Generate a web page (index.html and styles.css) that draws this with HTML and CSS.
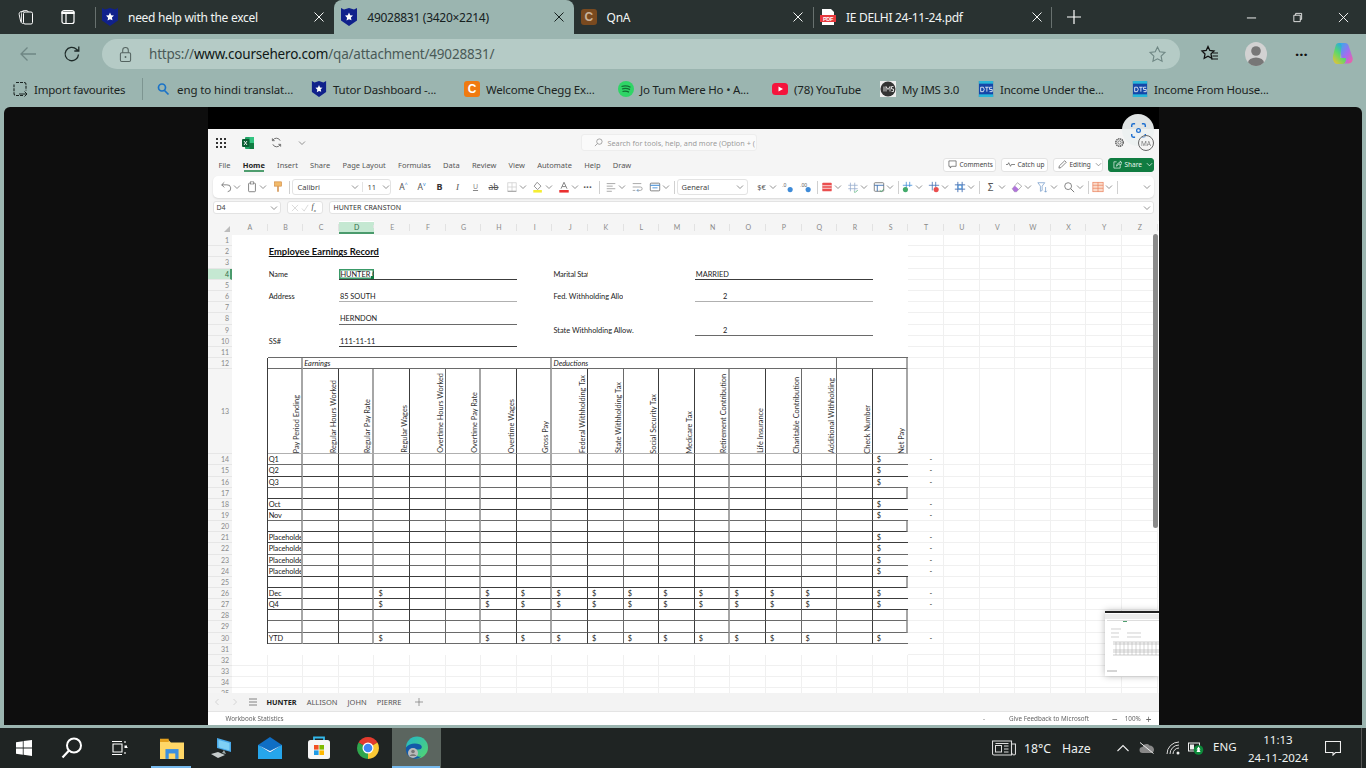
FILE: index.html
```html
<!DOCTYPE html>
<html lang="en">
<head>
<meta charset="utf-8">
<title>49028831 (3420×2214)</title>
<link rel="stylesheet" href="styles.css">
</head>
<body>
<svg class="defs" width="0" height="0" aria-hidden="true">
  <symbol id="shield" viewBox="0 0 16 18"><path d="M0 0l3 1.600L8 0l5 1.600L16 0v12.500L8 18 0 12.500z" fill="#10218b"/><path d="M8 4.600l1.200 2.600 2.800.3-2.100 1.900.6 2.800L8 11.200 5.500 12.600l.6-2.800L4 7.500l2.800-.3z" fill="#fff"/></symbol>
  <symbol id="dts" viewBox="0 0 16 18"><rect width="16" height="18" fill="#1547a8"/><rect width="16" height="3" fill="#29b6d8"/><rect y="15" width="16" height="3" fill="#29b6d8"/><path d="M2 7h3l1 2.500L5 12H2zM7 7h4M9 7v5M15 7h-3v2.500h3V12h-3" fill="none" stroke="#fff" stroke-width=".9"/></symbol>
  <symbol id="close" viewBox="0 0 10 10"><path d="M.5.5l9 9M9.500.5l-9 9" fill="none" stroke="currentColor" stroke-width="1"/></symbol>
  <symbol id="chev" viewBox="0 0 8 8"><path d="M1 2.500l3 3 3-3" fill="none" stroke="#777" stroke-width=".8"/></symbol>
</svg>

<header class="tabbar">
  <div class="tab-tools">
    <svg class="tt" viewBox="0 0 18 18"><rect x="6.500" y="4" width="9" height="12" rx="1.500" fill="none" stroke="#fff" stroke-width="1"/><path d="M6.500 15.500c-1.500 0-2.500-.8-2.800-2L2.200 6.500c-.3-1.500.5-2.500 2-2.900l4-1c1.500-.3 2.500.1 3.200 1.400" fill="none" stroke="#fff" stroke-width="1"/><path d="M4.500 14V5.500c0-1.500.8-2.500 2.500-2.500" fill="none" stroke="#fff" stroke-width=".8"/></svg>
    <svg class="tt" viewBox="0 0 18 18"><rect x="3" y="2.500" width="12" height="13" rx="2" fill="none" stroke="#fff" stroke-width="1.200"/><path d="M3 5.500h12V4H3zM7 5.500v10" stroke="#fff" stroke-width="1.200" fill="#fff"/></svg>
  </div>
  <div class="tab sep">
    <svg class="fav"><use href="#shield"/></svg><span class="tab-title">need help with the excel</span>
    <svg class="x"><use href="#close"/></svg>
  </div>
  <div class="tab active">
    <svg class="fav"><use href="#shield"/></svg><span class="tab-title">49028831 (3420×2214)</span>
    <svg class="x"><use href="#close"/></svg>
  </div>
  <div class="tab">
    <span class="c-badge brown">C</span><span class="tab-title">QnA</span>
    <svg class="x"><use href="#close"/></svg>
  </div>
  <div class="tab sep pdf-tab">
    <svg class="fav pdf" viewBox="0 0 16 16"><path d="M2 0h9l3 3v13H2z" fill="#fff"/><rect x="0" y="6" width="16" height="7" fill="#e8383d"/><text x="8" y="11.600" text-anchor="middle" font-size="5.500" font-weight="700" fill="#fff" font-family="Liberation Sans">PDF</text></svg>
    <span class="tab-title">IE DELHI 24-11-24.pdf</span>
    <svg class="x"><use href="#close"/></svg>
  </div>
  <div class="newtab"><svg viewBox="0 0 16 16"><path d="M8 1v14M1 8h14" stroke="#fff" stroke-width="1.200"/></svg></div>
  <div class="winctl">
    <svg viewBox="0 0 12 12"><path d="M1 6.500h10" stroke="#fff"/></svg>
    <svg viewBox="0 0 12 12"><path d="M2 3.500h7v7H2zM4 3.500V1.500h6.500V8H9" fill="none" stroke="#fff" stroke-width=".9"/></svg>
    <svg viewBox="0 0 12 12"><path d="M1 1l10 10M11 1L1 11" stroke="#fff"/></svg>
  </div>
</header>

<nav class="toolbar">
  <svg class="tb back" viewBox="0 0 20 20"><path d="M18 10H3M9.500 3.500L3 10l6.500 6.500" fill="none" stroke="#6f8784" stroke-width="1.300"/></svg>
  <svg class="tb reload" viewBox="0 0 20 20"><path d="M16.500 10.500a6.700 6.700 0 1 1-2-5.300L16.500 7M16.800 2.500V7h-4.500" fill="none" stroke="#1e2a28" stroke-width="1.300"/></svg>
  <div class="urlbar">
    <svg class="lock" viewBox="0 0 14 18"><path d="M4 7V4.500a3 3 0 0 1 6 0V7" fill="none" stroke="#53625f" stroke-width="1.100"/><rect x="1.500" y="7" width="11" height="9.500" rx="1.500" fill="none" stroke="#53625f" stroke-width="1.100"/><circle cx="7" cy="11.700" r="1" fill="#53625f"/></svg>
    <span class="url">https://<b>www.coursehero.com</b>/qa/attachment/49028831/</span>
    <svg class="star" viewBox="0 0 20 20"><path d="M10 2.200l2.400 5 5.400.7-4 3.800 1 5.400L10 14.500l-4.800 2.600 1-5.400-4-3.800 5.400-.7z" fill="none" stroke="#6f8784" stroke-width="1.200"/></svg>
  </div>
  <svg class="favs" viewBox="0 0 20 20"><path d="M8 2.500l1.800 4 4.200.5-3 3 .8 4.300L8 12.200l-3.800 2.100.8-4.300-3-3 4.200-.5z" fill="none" stroke="#111" stroke-width="1.300"/><path d="M13 9h5M12.500 12h5.500M11 15h7" stroke="#111" stroke-width="1.100"/></svg>
  <div class="avatar"><svg viewBox="0 0 22 24"><circle cx="11" cy="9" r="4.800" fill="#777"/><ellipse cx="11" cy="21" rx="8" ry="5.500" fill="#777"/></svg></div>
  <span class="dots">···</span>
  <svg class="copilot" viewBox="0 0 22 24"><defs><linearGradient id="cp1" x1="0" y1="0" x2="1" y2="1"><stop offset="0" stop-color="#27b5e8"/><stop offset=".55" stop-color="#a46cf0"/><stop offset="1" stop-color="#f9609a"/></linearGradient><linearGradient id="cp2" x1="0" y1="1" x2=".6" y2="0"><stop offset="0" stop-color="#f9c02e"/><stop offset=".55" stop-color="#5cd86a"/><stop offset="1" stop-color="#27a6e8"/></linearGradient></defs><path d="M7 1h6c2 0 3 1 3.500 2.500l4 12c.8 3-1 6-4 6h-6z" fill="url(#cp1)"/><path d="M7 1c-2 0-3 1-3.500 3L1.200 13c-1 4 .5 8.500 4 9h5c2 0 3-1 3.500-3l.3-3H8l1.500-11C10 3 9 1 7 1z" fill="url(#cp2)"/></svg>
</nav>

<nav class="bookmarks">
  <div class="bm bm-import"><svg class="ic" viewBox="0 0 16 16"><path d="M4 1.500h8a2 2 0 0 1 2 2v6M11 14.500H4a2 2 0 0 1-2-2v-9" fill="none" stroke="#1b2422" stroke-width="1.100" stroke-dasharray="3 1"/><path d="M7 13h8M12.500 10.500L15 13l-2.500 2.500" fill="none" stroke="#1b2422" stroke-width="1"/></svg><span>Import favourites</span></div>
  <div class="bm bm-search"><svg class="ic" viewBox="0 0 16 16"><circle cx="7" cy="6.500" r="3.500" fill="none" stroke="#1a73c7" stroke-width="1.700"/><path d="M9.500 9.500l4 4" stroke="#1a73c7" stroke-width="1.700"/></svg><span>eng to hindi translat...</span></div>
  <div class="bm bm-tutor"><svg class="ic"><use href="#shield"/></svg><span>Tutor Dashboard -...</span></div>
  <div class="bm bm-chegg"><span class="c-badge orange">C</span><span>Welcome Chegg Ex...</span></div>
  <div class="bm bm-spot"><svg class="ic" viewBox="0 0 16 16"><circle cx="8" cy="8" r="8" fill="#2fd566"/><path d="M3.500 5.500c3-1 6-.8 9 .7M4 8c2.500-.8 5.500-.6 8 .6M4.500 10.500c2-.5 4.500-.4 6.500.6" fill="none" stroke="#126e33" stroke-width="1.200"/></svg><span>Jo Tum Mere Ho • A...</span></div>
  <div class="bm bm-yt"><svg class="ic" viewBox="0 0 16 16"><rect y="2" width="16" height="12" rx="3.500" fill="#f5143c"/><path d="M6.500 5.500v5L11 8z" fill="#fff"/></svg><span>(78) YouTube</span></div>
  <div class="bm bm-ims"><svg class="ic" viewBox="0 0 16 16"><rect width="16" height="16" fill="#eee"/><circle cx="8" cy="8" r="7.500" fill="#333"/><path d="M4 5.500v5M6 10.500v-5l2 3 2-3v5M13.500 5.500h-2v2.500h2v2.500h-2" fill="none" stroke="#fff" stroke-width=".8"/></svg><span>My IMS 3.0</span></div>
  <div class="bm bm-dts"><svg class="ic"><use href="#dts"/></svg><span>Income Under the...</span></div>
  <div class="bm"><svg class="ic"><use href="#dts"/></svg><span>Income From House...</span></div>
</nav>

<main class="viewer">
  <div class="viewer-side"></div>
  <div class="shot">
    <div class="shot-top"></div>
    <section class="app">
      <div class="app-head">
        <svg class="waffle" viewBox="0 0 10 10"><g fill="#333"><rect width="2" height="2"/><rect x="4" width="2" height="2"/><rect x="8" width="2" height="2"/><rect y="4" width="2" height="2"/><rect x="4" y="4" width="2" height="2"/><rect x="8" y="4" width="2" height="2"/><rect y="8" width="2" height="2"/><rect x="4" y="8" width="2" height="2"/><rect x="8" y="8" width="2" height="2"/></g></svg>
        <svg class="xl" viewBox="0 0 12 12"><rect x="3" y="0" width="9" height="12" rx="1" fill="#21a366"/><rect x="7.500" y="0" width="4.500" height="6" fill="#33c481"/><rect x="7.500" y="6" width="4.500" height="6" fill="#107c41"/><rect y="2" width="7.500" height="8" rx="1" fill="#0b5f33"/><path d="M2 4l3 4M5 4L2 8" stroke="#fff" stroke-width=".9"/></svg>
        <svg class="sync" viewBox="0 0 12 12"><path d="M10 4a4.500 4.500 0 0 0-8-.5M2 8a4.500 4.500 0 0 0 8 .5" fill="none" stroke="#555" stroke-width=".9"/><path d="M1.500 1.500v2.500H4M10.500 10.500V8H8" fill="none" stroke="#555" stroke-width=".9"/></svg>
        <svg class="headchev"><use href="#chev"/></svg>
        <div class="searchbox"><svg viewBox="0 0 10 10"><circle cx="6" cy="4" r="3" fill="none" stroke="#888" stroke-width=".8"/><path d="M3.800 6.200L1 9" stroke="#888" stroke-width=".8"/></svg><span>Search for tools, help, and more (Option + (</span></div>
        <svg class="gear" viewBox="0 0 12 12"><circle cx="6" cy="6" r="1.800" fill="none" stroke="#555" stroke-width=".8"/><circle cx="6" cy="6" r="4" fill="none" stroke="#555" stroke-width="1.600" stroke-dasharray="1.500 .6"/></svg>
      </div>

      <div class="menu-row">
        <span>File</span><span class="on">Home</span><span>Insert</span><span>Share</span><span>Page Layout</span><span>Formulas</span><span>Data</span><span>Review</span><span>View</span><span>Automate</span><span>Help</span><span>Draw</span>
        <div class="btns">
          <button class="pill"><svg viewBox="0 0 10 10"><path d="M1 1h8v6H4L2.500 9V7H1z" fill="none" stroke="#444" stroke-width=".7"/></svg>Comments</button>
          <button class="pill"><svg viewBox="0 0 10 10"><path d="M0 5h2l1-2 2 4 1-2h4" fill="none" stroke="#444" stroke-width=".7"/></svg>Catch up</button>
          <button class="pill"><svg viewBox="0 0 10 10"><path d="M1 9l.5-2.500L7.500.8l1.700 1.700-6 6z" fill="none" stroke="#444" stroke-width=".7"/></svg>Editing<svg class="pc"><use href="#chev"/></svg></button>
          <button class="pill share"><svg viewBox="0 0 10 10"><path d="M4 2H1v7h7V6M4 7c0-3 2-4 4-4V1l2 2.500L8 6V4.500C6 4.500 5 5 4 7z" fill="none" stroke="#fff" stroke-width=".7"/></svg>Share<svg class="pc wh" viewBox="0 0 8 8"><path d="M1 2.500l3 3 3-3" fill="none" stroke="#fff" stroke-width=".8"/></svg></button>
        </div>
      </div>

      <div class="ribbon">
        <svg class="i" viewBox="0 0 14 14"><path d="M5 1.500L2 4.500l3 3M2 4.500h6a4 4 0 0 1 1 8" fill="none" stroke="#555" stroke-width=".9"/></svg><svg class="c"><use href="#chev"/></svg>
        <svg class="i" viewBox="0 0 14 14"><rect x="3" y="2.500" width="8" height="10" rx="1" fill="none" stroke="#555" stroke-width=".9"/><rect x="5" y="1" width="4" height="2.500" fill="#fff" stroke="#555" stroke-width=".7"/></svg><svg class="c"><use href="#chev"/></svg>
        <svg class="i" viewBox="0 0 14 14"><rect x="3" y="1" width="8" height="5" fill="#f0b35c" stroke="#c8731c" stroke-width=".7"/><path d="M7 6v6.500" stroke="#c8731c" stroke-width="1.600"/></svg>
        <i class="bar"></i>
        <div class="select font-sel"><span class="s1">Calibri</span><svg class="c"><use href="#chev"/></svg><span class="s2">11</span><svg class="c"><use href="#chev"/></svg></div>
        <span class="gl grow">A<sup>^</sup></span><span class="gl">A<sup class="bl">v</sup></span>
        <b class="gl bd">B</b><i class="gl it">I</i><u class="gl un">U</u><s class="gl">ab</s>
        <svg class="i" viewBox="0 0 14 14"><path d="M2 2h10v10H2zM7 2v10M2 7h10" fill="none" stroke="#c4c4c4" stroke-width=".8"/><path d="M2 12h10" stroke="#888" stroke-width="1"/></svg><svg class="c"><use href="#chev"/></svg>
        <svg class="i" viewBox="0 0 14 14"><path d="M6 1.500l4.500 4.500L6.500 10 2.500 6z" fill="none" stroke="#555" stroke-width=".8"/><rect x="1.500" y="10.500" width="10" height="3" fill="#f5ec1e"/></svg><svg class="c"><use href="#chev"/></svg>
        <svg class="i" viewBox="0 0 14 14"><path d="M3.500 9L7 1.500 10.500 9M5 6.500h4" fill="none" stroke="#555" stroke-width=".9"/><rect x="1.500" y="10.500" width="11" height="3" fill="#e81a1a"/></svg><svg class="c"><use href="#chev"/></svg>
        <span class="gl more">···</span>
        <i class="bar"></i>
        <svg class="i" viewBox="0 0 14 14"><path d="M2 3h10M2 6h7M2 9h10M2 12h6" stroke="#888" stroke-width=".9"/></svg><svg class="c"><use href="#chev"/></svg>
        <svg class="i" viewBox="0 0 14 14"><path d="M2 3h10M2 7h9a2 2 0 0 1 0 4H7M2 11h3" fill="none" stroke="#888" stroke-width=".9"/><path d="M8.500 9.500L7 11l1.500 1.500" fill="none" stroke="#2a7fd4" stroke-width=".9"/></svg>
        <svg class="i" viewBox="0 0 14 14"><rect x="1.500" y="2.500" width="11" height="9" rx="1" fill="none" stroke="#555" stroke-width=".9"/><path d="M1.500 5h11" stroke="#2a7fd4" stroke-width="1.200"/><path d="M4 8h6" stroke="#2a7fd4" stroke-width="1"/></svg><svg class="c"><use href="#chev"/></svg>
        <i class="bar"></i>
        <div class="select gen-sel"><span class="s1">General</span><svg class="c"><use href="#chev"/></svg></div>
        <span class="gl money">$€</span><svg class="c"><use href="#chev"/></svg>
        <svg class="i" viewBox="0 0 14 14"><text x="0" y="7" font-size="6" fill="#555" font-family="Liberation Sans">.0</text><circle cx="9.500" cy="10" r="3" fill="#2a7fd4"/></svg>
        <svg class="i" viewBox="0 0 14 14"><text x="0" y="7" font-size="6" fill="#555" font-family="Liberation Sans">.00</text><circle cx="9.500" cy="10" r="3" fill="#2a7fd4"/></svg>
        <i class="bar"></i>
        <svg class="i first" viewBox="0 0 14 14"><rect x="1.500" y="2" width="11" height="10" rx="1" fill="#e83b3b"/><path d="M1.500 5.500h11M1.500 8.500h11" stroke="#fff" stroke-width=".9"/></svg><svg class="c"><use href="#chev"/></svg>
        <svg class="i" viewBox="0 0 14 14"><path d="M4 2v10M9 2v10M1.500 5h11M1.500 9h11" stroke="#8aa2c8" stroke-width=".9"/><path d="M8 12l1.500 1.500 3-3" fill="none" stroke="#2fa35c" stroke-width=".9"/></svg><svg class="c"><use href="#chev"/></svg>
        <svg class="i" viewBox="0 0 14 14"><rect x="1.500" y="2" width="11" height="10" rx="1" fill="none" stroke="#555" stroke-width=".9"/><path d="M1.500 5h11M5 5v7" stroke="#1f5ca8" stroke-width="1"/><path d="M8 11l1.500 1.500 3-3" fill="none" stroke="#2fa35c" stroke-width="1"/></svg><svg class="c"><use href="#chev"/></svg>
        <i class="bar"></i>
        <svg class="i first" viewBox="0 0 14 14"><path d="M5 1v9M9 1v6M1 5h11" stroke="#2a7fd4" stroke-width=".9"/><circle cx="4" cy="10" r="3" fill="#2fa35c"/></svg><svg class="c"><use href="#chev"/></svg>
        <svg class="i" viewBox="0 0 14 14"><path d="M5 1v10M9 1v6M1 5h12" stroke="#2a5ca8" stroke-width=".9"/><circle cx="9.500" cy="10" r="3" fill="#e83b3b"/></svg><svg class="c"><use href="#chev"/></svg>
        <svg class="i" viewBox="0 0 14 14"><path d="M4.500 1v12M9.500 1v12M1 4.500h12M1 9.500h12" stroke="#2a5ca8" stroke-width="1"/><circle cx="7" cy="7" r="2.500" fill="none" stroke="#2a7fd4"/></svg><svg class="c"><use href="#chev"/></svg>
        <i class="bar"></i>
        <span class="gl sum">Σ</span><svg class="c"><use href="#chev"/></svg>
        <svg class="i" viewBox="0 0 14 14"><path d="M1.500 9l6-7 5 4-6 6.500H4z" fill="#fff" stroke="#888" stroke-width=".8"/><path d="M1.500 9l3-3.500 4.500 4-2.500 3H4z" fill="#a865d6"/></svg><svg class="c"><use href="#chev"/></svg>
        <svg class="i" viewBox="0 0 14 14"><path d="M1 2h8L6 6v5L4 12V6zM10 7v6M8.500 11.500L10 13l1.500-1.500" fill="none" stroke="#5b8ac2" stroke-width=".8"/></svg><svg class="c"><use href="#chev"/></svg>
        <svg class="i" viewBox="0 0 14 14"><circle cx="6" cy="6" r="4" fill="none" stroke="#555" stroke-width=".9"/><path d="M9 9l4 4" stroke="#555"/></svg><svg class="c"><use href="#chev"/></svg>
        <i class="bar"></i>
        <svg class="i first" viewBox="0 0 14 14"><rect x="1" y="1.500" width="12" height="11" fill="#fbd8c6" stroke="#e8734a" stroke-width=".8"/><path d="M1 5h12M1 8.500h12M7 1.500v11" stroke="#e8734a" stroke-width=".8"/></svg><svg class="c"><use href="#chev"/></svg>
        <i class="bar"></i>
        <svg class="c last"><use href="#chev"/></svg>
      </div>

      <div class="formula-row">
        <div class="namebox"><span>D4</span><svg class="c"><use href="#chev"/></svg></div>
        <div class="fxbox"><svg viewBox="0 0 9 9"><path d="M1 1l7 7M8 1L1 8" stroke="#ccc" stroke-width=".8"/></svg><svg viewBox="0 0 9 9"><path d="M1 5l2.500 3L8 1" fill="none" stroke="#ccc" stroke-width=".8"/></svg><em>f<sub>x</sub></em></div>
        <div class="formula"><span>HUNTER CRANSTON</span><svg class="c"><use href="#chev"/></svg></div>
      </div>

      <div class="sheet-wrap">
        <div class="sheet" id="sheet"></div>
        <div class="vscroll"></div>
        <div class="minimap">
          <svg viewBox="0 0 54 65" preserveAspectRatio="none"><rect width="54" height="2" fill="#222"/><rect y="3" width="54" height="5" fill="#ececec"/><rect x="2" y="9" width="52" height="1" fill="#ddd"/><rect x="18" y="10" width="4" height="1" fill="#4f9e6f"/><path d="M6 18h10M6 22h8M22 22h14M6 26h8M22 26h14" stroke="#bbb" stroke-width=".7"/><path d="M8 31h46M8 33h46M8 39h46M8 41h46M8 44h46" stroke="#999" stroke-width=".5"/><path d="M11 31v13M15 31v13M19 31v13M23 31v13M27 31v13M31 31v13M35 31v13M39 31v13M43 31v13M47 31v13M51 31v13" stroke="#aaa" stroke-width=".5"/><path d="M2 60h10" stroke="#aaa"/></svg>
        </div>
      </div>

      <div class="sheet-tabs">
        <svg class="nav" viewBox="0 0 6 8"><path d="M4.500 1L1.500 4l3 3" fill="none" stroke="#ccc" stroke-width=".8"/></svg>
        <svg class="nav" viewBox="0 0 6 8"><path d="M1.500 1l3 3-3 3" fill="none" stroke="#ccc" stroke-width=".8"/></svg>
        <svg class="ham" viewBox="0 0 8 8"><path d="M0 1h8M0 4h8M0 7h8" stroke="#666" stroke-width=".8"/></svg>
        <span class="st on">HUNTER</span><span class="st">ALLISON</span><span class="st">JOHN</span><span class="st">PIERRE</span>
        <svg class="plus" viewBox="0 0 8 8"><path d="M4 0v8M0 4h8" stroke="#777" stroke-width=".7"/></svg>
      </div>

      <footer class="status">
        <span class="wb">Workbook Statistics</span>
        <span class="st-dash">-</span>
        <span class="fb">Give Feedback to Microsoft</span>
        <span class="zm">−</span><span class="pct">100%</span><span class="zm">+</span>
      </footer>
    </section>
  </div>
  <div class="viewer-side"></div>
  <div class="scan"><svg viewBox="0 0 20 20"><path d="M2 6V4a2 2 0 0 1 2-2h2M14 2h2a2 2 0 0 1 2 2v2M18 14v2a2 2 0 0 1-2 2h-2M6 18H4a2 2 0 0 1-2-2v-2" fill="none" stroke="#1d6fd0" stroke-width="1.700"/><circle cx="10" cy="10" r="2.200" fill="none" stroke="#1d6fd0" stroke-width="1.500"/></svg></div>
  <div class="me">MA</div>
</main>

<footer class="taskbar">
  <div class="tk w48"><svg class="t-win" viewBox="0 0 16 16"><path d="M0 2.200l6.800-1v6.300H0zM7.600 1.100L16 0v7.500H7.600zM0 8.400h6.800v6.300L0 13.800zM7.600 8.400H16V16l-8.400-1.200z" fill="#fff"/></svg></div>
  <div class="tk w48"><svg class="t-s" viewBox="0 0 22 22"><circle cx="13" cy="8.500" r="7" fill="none" stroke="#fff" stroke-width="2"/><path d="M8 13.500L1.500 20.500" stroke="#fff" stroke-width="2.200"/></svg></div>
  <div class="tk w48"><svg class="t-v" viewBox="0 0 18 18"><path d="M2 5h9v8H2zM1 2.500h10M1 15.500h10M14 2v2M14 13v2M16 8v1" fill="none" stroke="#fff" stroke-width="1.100"/><rect x="13.500" y="6.500" width="2.500" height="2.500" fill="#fff"/></svg></div>
  <div class="tk w49 explorer lit"><svg class="t-e" viewBox="0 0 22 20"><path d="M0 3h8l2 2h12v15H0z" fill="#ffd767"/><path d="M0 1.500h8v3H0z" fill="#e4a11e"/><rect x="5" y="11" width="12" height="9" fill="#3b8fe0"/><rect x="8" y="15" width="6" height="5" fill="#ffd767"/></svg></div>
  <div class="tk w49"><svg class="t-e" viewBox="0 0 24 24"><path d="M8 2l14 4v10L8 12z" fill="#49a8e8"/><path d="M9.500 4l11 3v7.500l-11-3.200z" fill="#7fd0f5"/><path d="M15 14l2 4-4-1z" fill="#9aa7a8"/><path d="M2 18l7-2 7 3-7 3z" fill="#c6cccc"/></svg></div>
  <div class="tk w49"><svg class="t-e" viewBox="0 0 24 22"><path d="M0 8L12 0l12 8v14H0z" fill="#0f6ec4"/><path d="M0 8l12 8 12-8v14H0z" fill="#26a6ec"/><path d="M1 8.500L12 15.500 23 8.500 12 14z" fill="#e8f7ff"/></svg></div>
  <div class="tk w49"><svg class="t-e" viewBox="0 0 24 24"><path d="M7 4V1.500h10V4" fill="none" stroke="#32b8ea" stroke-width="1.800"/><rect x="1" y="4" width="22" height="19" rx="2.500" fill="#f6f6f6"/><rect x="7" y="9" width="4.600" height="4.600" fill="#f25022"/><rect x="12.400" y="9" width="4.600" height="4.600" fill="#7fba00"/><rect x="7" y="14.400" width="4.600" height="4.600" fill="#1e9be8"/><rect x="12.400" y="14.400" width="4.600" height="4.600" fill="#ffb900"/></svg></div>
  <div class="tk w49"><svg class="t-c" viewBox="0 0 24 24"><path d="M12 12L2.500 6.500A11 11 0 0 1 21.500 6.500z" fill="#e33b2e"/><path d="M12 12l9.500-5.500A11 11 0 0 1 12 23z" fill="#fcc934"/><path d="M12 12v11A11 11 0 0 1 2.500 6.500z" fill="#2fa64d"/><circle cx="12" cy="12" r="5.500" fill="#fff"/><circle cx="12" cy="12" r="4.300" fill="#3f86f4"/></svg></div>
  <div class="tk w49 edge lit"><svg class="t-c" viewBox="0 0 24 24"><defs><linearGradient id="edg" x1="0" y1="0" x2="1" y2="1"><stop offset="0" stop-color="#22b7c9"/><stop offset="1" stop-color="#56d66c"/></linearGradient></defs><circle cx="12" cy="11.500" r="11" fill="url(#edg)"/><path d="M1 11.500c3-4 9-5 14-3 3 1.500 2 5-1 5H8c-1 4 3 8 8 7-2 2-5 2.500-7 2-5-1-9-5-8-11z" fill="#1359a8"/><circle cx="8" cy="17" r="5" fill="#bbb"/><circle cx="8" cy="15.500" r="1.800" fill="#777"/><path d="M4.500 20c1-2.500 6-2.500 7 0" fill="#777"/></svg></div>
  <div class="tray">
    <svg class="news" viewBox="0 0 24 16"><path d="M.5 1h19v14H2a1.500 1.500 0 0 1-1.500-1.500z" fill="none" stroke="#ddd" stroke-width="1.100"/><path d="M19.500 4h4v9.500a1.500 1.500 0 0 1-3 0" fill="none" stroke="#ddd" stroke-width="1.100"/><rect x="3.500" y="5.500" width="6" height="6.500" fill="none" stroke="#ddd"/><path d="M3.500 3.500h13M12 6h4.500M12 9h4.500M12 12h4.500" stroke="#ddd"/></svg>
    <span>18°C</span><span>Haze</span>
    <svg class="caret" viewBox="0 0 12 8"><path d="M.5 7L6 1.500 11.500 7" fill="none" stroke="#eee" stroke-width="1.100"/></svg>
    <svg class="cloud" viewBox="0 0 16 12"><path d="M3.500 11a3 3 0 0 1 0-6c.7-3 5-4 7-1.500 2.500 0 4.500 2 4.500 4s-1 3.500-3 3.500z" fill="#888"/><path d="M1 .5l13.500 11" stroke="#eee"/></svg>
    <svg class="wifi" viewBox="0 0 14 14"><path d="M1 13a12 12 0 0 1 12-12M4 13a9 9 0 0 1 9-9M7 13a6 6 0 0 1 6-6" fill="none" stroke="#ddd" stroke-width="1"/><circle cx="12" cy="12" r="1.500" fill="#eee"/></svg>
    <svg class="batt" viewBox="0 0 16 14"><rect x=".5" y="2" width="11" height="8" fill="none" stroke="#eee"/><rect x="2" y="3.500" width="4" height="5" fill="#eee"/><circle cx="10.500" cy="9" r="4.800" fill="#0d8a3a"/><path d="M10.500 5.500l2 3h-1.200l1.200 2.500h-4l1.200-2.500H8.500z" fill="#fff"/></svg>
    <span class="eng">ENG</span>
    <div class="clock"><span>11:13</span><span>24-11-2024</span></div>
    <svg class="notif" viewBox="0 0 16 16"><path d="M.5 1.500h15v11h-5l-2.500 2.500v-2.500H.5z" fill="none" stroke="#eee" stroke-width="1.100"/></svg>
    <i class="peek"></i>
  </div>
</footer>
<script src="sheet.js"></script>
</body>
</html>
```

FILE: styles.css
```css
* { box-sizing: border-box; }
html, body { margin: 0; padding: 0; }
body {
  width: 1366px; height: 768px; overflow: hidden;
  display: flex; flex-direction: column;
  background: #9bb5b0;
  font-family: "Noto Sans", sans-serif;
  color: #1b2422;
}
.defs { position: absolute; }
svg { display: block; flex: none; }

/* ===== tab strip ===== */
.tabbar { height: 34px; background: #293231; display: flex; align-items: stretch; color: #f2f5f4; flex: none; }
.tab-tools { width: 95px; display: flex; align-items: center; padding-left: 17px; gap: 24px; }
.tt { width: 18px; height: 18px; }
.tab { width: 239.300px; display: flex; align-items: center; padding-left: 7px; position: relative; font-size: 12px; letter-spacing: -.28px; }
.tab.sep::before { content: ""; position: absolute; left: 0; top: 7px; bottom: 6px; width: 1px; background: #68716f; }
.tab.pdf-tab::after { content: ""; position: absolute; right: 0; top: 7px; bottom: 6px; width: 1px; background: #68716f; }
.tab.active { background: #9bb5b0; color: #16201e; border-radius: 8px 8px 0 0; }
.fav { width: 16px; height: 18px; }
.fav.pdf { width: 16px; height: 16px; }
.tab-title { margin-left: 10px; white-space: nowrap; }
.tab .x { width: 10px; height: 10px; margin-left: auto; margin-right: 10px; color: #f2f5f4; }
.tab.active .x { color: #16201e; }
.c-badge { width: 16px; height: 16px; border-radius: 3px; display: flex; align-items: center; justify-content: center; font: 700 12px "Liberation Sans", sans-serif; color: #fff; flex: none; }
.c-badge.brown { background: #7a4a1f; color: #c9b29c; }
.c-badge.orange { background: #f07a10; }
.newtab { width: 44px; display: flex; align-items: center; justify-content: center; }
.newtab svg { width: 16px; height: 16px; }
.winctl { margin-left: auto; display: flex; align-items: center; gap: 35px; padding-right: 17px; }
.winctl svg { width: 11px; height: 11px; }

/* ===== toolbar ===== */
.toolbar { height: 36px; display: flex; align-items: center; flex: none; padding-left: 18px; padding-top: 4px; }
.tb { width: 20px; height: 20px; }
.reload { margin-left: 24px; }
.urlbar { margin-left: 20px; width: 1078px; height: 30px; border-radius: 15px; background: #b5cbc6; display: flex; align-items: center; padding-left: 17px; }
.lock { width: 13px; height: 17px; }
.url { margin-left: 17px; font-size: 13.500px; letter-spacing: -.2px; color: #4a5a57; white-space: nowrap; }
.url b { font-weight: 400; color: #0f1716; }
.star { width: 19px; height: 19px; margin-left: auto; margin-right: 13px; }
.favs { width: 20px; height: 20px; margin-left: 20px; }
.avatar { width: 22px; height: 24px; margin-left: 25px; border-radius: 50%; background: #d2d2d2; overflow: hidden; }
.avatar svg { width: 22px; height: 24px; }
.dots { margin-left: 28px; font-size: 15px; font-weight: 700; color: #111; line-height: 1; }
.copilot { width: 22px; height: 24px; margin-left: 24px; }

/* ===== bookmarks ===== */
.bookmarks { height: 37px; display: flex; align-items: center; padding: 1px 0 0 12px; flex: none; font-size: 11.500px; letter-spacing: -.2px; white-space: nowrap; }
.bm { display: flex; align-items: center; gap: 6px; width: 154px; }
.bm .ic { width: 16px; height: 16px; }
.bm-import { width: 143px; position: relative; }
.bm-import::after { content: ""; position: absolute; left: 130px; top: -3px; bottom: -3px; width: 1px; background: #7d9591; }
.bm-search { width: 156px; }
.bm-search span { letter-spacing: -.1px; }
.bm-tutor { width: 153px; }
.bm-yt { width: 108px; }
.bm-ims { width: 98px; }

/* ===== viewer ===== */
.viewer { height: 618px; margin: 0 4px; background: #0e0e0e; border-radius: 6px 6px 0 0; display: flex; position: relative; overflow: hidden; flex: none; }
.viewer-side { flex: 1; }
.shot { width: 951px; display: flex; flex-direction: column; flex: none; }
.shot-top { height: 22px; background: #000; flex: none; }
.app { flex: 1; background: #f5f5f5; display: flex; flex-direction: column; filter: blur(.35px); color: #444; font-size: 7px; min-height: 0; }

.scan { position: absolute; left: 1118px; top: 7px; width: 32px; height: 32px; border-radius: 50%; background: rgba(236, 240, 240, .95); display: flex; align-items: center; justify-content: center; }
.scan svg { width: 17px; height: 17px; }
.me { position: absolute; left: 1134px; top: 28px; width: 16px; height: 16px; border-radius: 50%; border: 1px solid #666; font-size: 6.500px; display: flex; align-items: center; justify-content: center; background: rgba(245, 245, 245, .6); color: #777; filter: blur(.35px); }

.app-head { height: 27px; display: flex; align-items: center; flex: none; position: relative; }
.waffle { width: 10px; height: 10px; margin-left: 8px; }
.xl { width: 12px; height: 12px; margin-left: 16px; }
.sync { width: 11px; height: 11px; margin-left: 17px; }
.headchev { width: 8px; height: 8px; margin-left: 16px; }
.searchbox { margin-left: 275px; width: 176px; height: 17px; background: #fafafa; border: 1px solid #ededed; border-radius: 3px; display: flex; align-items: center; padding-left: 12px; overflow: hidden; white-space: nowrap; color: #9a9a9a; font-size: 7.300px; }
.searchbox svg { width: 9px; height: 9px; margin-right: 5px; }
.gear { width: 11px; height: 11px; margin-left: 357px; }

.menu-row { height: 20px; display: flex; align-items: center; gap: 12.200px; padding: 0 5px 3px 11px; flex: none; color: #555; font-size: 7.500px; white-space: nowrap; }
.menu-row > span.on { color: #222; font-weight: 700; box-shadow: 0 3px 0 -1px #4f9e6f; }
.btns { margin-left: auto; display: flex; gap: 5px; }
.pill { height: 14px; border: 1px solid #e3e3e3; border-radius: 3px; background: #fff; font: inherit; font-size: 6.500px; color: #444; display: flex; align-items: center; gap: 3px; padding: 0 4px; }
.pill:nth-child(1) { width: 53px; }
.pill:nth-child(2) { width: 47px; }
.pill:nth-child(3) { width: 50px; }
.pill svg { width: 9px; height: 9px; }
.pill .pc { width: 7px; height: 7px; margin-left: 1px; }
.pill.share { width: 46px; background: #107c41; border-color: #107c41; color: #e8f5ee; }

.ribbon { height: 22px; margin: 0 5px; background: #fff; border-radius: 5px; box-shadow: 0 1px 2px rgba(0, 0, 0, .12); display: flex; align-items: center; gap: 4px; padding-left: 6px; flex: none; font-size: 8px; color: #555; }
.ribbon .i { width: 12px; height: 12px; margin: 0 1px; opacity: .9; }
.ribbon .c { width: 8px; height: 8px; margin-left: -4px; }
.ribbon .c.last { margin-left: 21px; }
.ribbon .i.first { margin-left: -1px; }
.bar { width: 1px; height: 13px; background: #d0d0d0; flex: none; }
.select { height: 16px; border: 1px solid #e3e3e3; border-radius: 3px; display: flex; align-items: center; font-size: 7.500px; color: #444; flex: none; }
.select .c { margin-left: 0; }
.font-sel { width: 99px; margin-left: -2px; margin-right: 2px; }
.font-sel .s1 { padding-left: 5px; width: 58px; }
.font-sel .c:nth-of-type(1) { margin-right: 3px; }
.font-sel .s2 { border-left: 1px solid #e3e3e3; padding-left: 5px; width: 20px; }
.gen-sel { width: 71px; margin-left: -2px; margin-right: 3px; justify-content: space-between; padding: 0 3px 0 4px; }
.gl { width: 14px; text-align: center; font-size: 8.500px; font-style: normal; color: #555; flex: none; line-height: 14px; }
.gl sup { font-size: 5px; color: #2a7fd4; line-height: 0; }
.gl.bd { font-size: 9px; color: #333; }
.gl.it { font: italic 9px "Liberation Serif", serif; }
.gl.un { color: #888; font-size: 7px; }
.gl.more { font-size: 10px; font-weight: 700; margin-left: -2px; }
.gl.money { font-size: 7.500px; }
.gl.sum { font-size: 10px; }

.formula-row { height: 13px; margin: 3px 5px 0; display: flex; gap: 6px; flex: none; font-size: 7px; color: #444; }
.namebox { width: 68px; background: #fff; border: 1px solid #e3e3e3; border-radius: 3px; display: flex; align-items: center; justify-content: space-between; padding: 0 2px 0 3px; }
.namebox .c, .formula .c { width: 8px; height: 8px; }
.fxbox { width: 36px; background: #fff; border: 1px solid #e3e3e3; border-radius: 3px; display: flex; align-items: center; gap: 2px; padding-left: 3px; }
.fxbox svg { width: 8px; height: 8px; }
.fxbox em { font: italic 8px "Liberation Serif", serif; margin-left: 1px; }
.fxbox sub { font-size: 5px; }
.formula { flex: 1; background: #fff; border: 1px solid #e3e3e3; border-radius: 3px; display: flex; align-items: center; justify-content: space-between; padding: 0 2px 0 4px; word-spacing: 1px; color: #333; }

/* ===== sheet ===== */
.sheet-wrap { height: 472px; margin-top: 7px; position: relative; overflow: hidden; flex: none; background: #fff; }
.sheet {
  display: grid;
  grid-template-columns: 24.600px repeat(26, 35.600px);
  grid-template-rows: 14px repeat(12, 11.200px) 85px repeat(22, 11.150px);
  font-family: Lato, sans-serif; font-size: 7.400px; color: #222; line-height: 12px;
}
.corner { background: #f5f5f5; display: flex; align-items: flex-end; justify-content: flex-end; padding: 0 2px 3px 0; }
.corner::after { content: ""; width: 0; height: 0; border-left: 6px solid transparent; border-bottom: 6px solid #bcbcbc; }
.ch { background: #f5f5f5; color: #8a8a8a; text-align: center; font-size: 7px; line-height: 13px; position: relative; }
.ch::after { content: ""; position: absolute; right: 0; top: 3px; bottom: 4px; width: 1px; background: #e2e2e2; }
.ch.sel { background: #c5e8d2; color: #2d6a46; border-bottom: 2px solid #4a9a6c; line-height: 11px; margin: 1px 0 1px; }
.rh { background: #f5f5f5; color: #8a8a8a; text-align: right; padding-right: 3px; font-size: 7px; border-bottom: 1px solid #e6e6e6; line-height: 11px; }
.rh.tall { display: flex; align-items: center; justify-content: flex-end; }
.rh.sel { background: #c5e8d2; color: #2d6a46; border-right: 2px solid #4a9a6c; padding-right: 1px; }

.cell { min-width: 0; white-space: nowrap; border-right: 1px solid #f0f0f0; border-bottom: 1px solid #f0f0f0; padding-left: 1px; position: relative; }
.cell.bare { border-right: 0; border-bottom: 0; }
.cell.v-d { border-right: 1px solid #3c3c3c; }
.cell.v-m { border-right: 1px solid #6a6a6a; }
.cell.v-g { border-right: 2px solid #a6a6a6; }
.cell.h-d { border-bottom: 1px solid #3c3c3c; }
.cell.h-m { border-bottom: 1px solid #6a6a6a; }
.cell.h-g { border-bottom: 1px solid #b0b0b0; }
.clip { overflow: hidden; letter-spacing: -.12px; }
.t2 { display: block; width: 70px; overflow: hidden; }
.title { font-weight: 700; font-size: 9.400px; text-decoration: underline; color: #111; }
.em { font-style: italic; }
.right { text-align: right; padding-right: 3px; padding-left: 0; }
.dash { padding-left: 21px; }
.money-cell { padding-left: 4px; }
.head { display: flex; justify-content: flex-end; align-items: flex-end; padding: 0; color: #333; }
.head span { writing-mode: vertical-rl; transform: rotate(180deg); line-height: 8px; }
.sel-cell { box-shadow: inset 0 0 0 1.500px #3a9a68; overflow: hidden; z-index: 2; padding-left: 1.500px; }
.sel-cell::after { content: ""; position: absolute; right: 0; bottom: 0; width: 3px; height: 3px; background: #107c41; }

.vscroll { position: absolute; right: 1px; top: 13px; width: 5px; height: 294px; background: #8b8b8b; border-radius: 3px; }
.minimap { position: absolute; right: 0; top: 390px; width: 54px; height: 65px; background: #fff; box-shadow: 0 0 7px rgba(0, 0, 0, .28); }
.minimap svg { width: 54px; height: 65px; }

.sheet-tabs { height: 19px; display: flex; align-items: center; flex: none; background: #f3f3f3; border-bottom: 1px solid #e4e4e4; color: #555; font-size: 7.500px; }
.nav { width: 6px; height: 8px; margin-left: 6px; }
.nav + .nav { margin-left: 12px; }
.ham { width: 8px; height: 8px; margin-left: 11px; margin-right: 10px; }
.st { margin-right: 10px; }
.st.on { font-weight: 700; color: #222; font-size: 7.300px; box-shadow: 0 7px 0 -6px #107c41, 0 8px 0 -6px #107c41; }
.plus { width: 8px; height: 8px; margin-left: 4px; }

.status { height: 13px; background: #fff; display: flex; align-items: center; flex: none; color: #666; font-size: 6.300px; padding-left: 18px; white-space: nowrap; }
.st-dash { margin-left: auto; }
.fb { margin-left: 24px; }
.zm { font-size: 10px; line-height: 10px; margin: 0 7px 0 23px; }
.zm + .pct + .zm { margin: 0 7px 0 5px; }

/* ===== taskbar ===== */
.taskbar { height: 40px; margin-top: 3px; background: #1f2423; display: flex; align-items: center; flex: none; }
.tk { height: 40px; display: flex; align-items: center; justify-content: center; position: relative; flex: none; }
.w48 { width: 48px; }
.w49 { width: 49px; }
.explorer { margin-left: 3px; }
.lit::after { content: ""; position: absolute; left: 4px; right: 5px; bottom: 0; height: 2px; background: #76b9ed; }
.edge { background: #5b655f; }
.edge.lit::after { left: 0; right: 1px; }
.t-win { width: 16px; height: 16px; }
.t-s { width: 22px; height: 22px; }
.t-v { width: 18px; height: 18px; }
.t-e { width: 24px; height: 24px; }
.t-c { width: 24px; height: 24px; }
.tray {
  margin-left: auto; width: 374px; height: 40px;
  display: grid; grid-template-columns: 32px 38px 55px 22px 27px 22px 25px 31px 81px 36px 5px;
  align-items: center; color: #eef2f1; font-size: 12.300px; white-space: nowrap;
}
.news { width: 24px; height: 16px; }
.caret { width: 12px; height: 8px; }
.cloud { width: 16px; height: 12px; }
.wifi { width: 14px; height: 14px; }
.batt { width: 16px; height: 14px; }
.eng { font-size: 11.500px; margin-bottom: 3px; }
.clock { display: flex; flex-direction: column; align-items: center; width: 68px; font-size: 11.500px; line-height: 18px; padding-top: 2px; }
.notif { width: 16px; height: 16px; }
.peek { width: 1px; height: 40px; background: #555; }
```

FILE: sheet.js
```js
// Builds the worksheet grid from its data: columns A–Z, rows 1–35.
(function () {
  var COLS = 'ABCDEFGHIJKLMNOPQRSTUVWXYZ'.split('');
  var sheet = document.getElementById('sheet');

  var vertical = { A: 'd', B: 'g', C: 'd', D: 'g', E: 'd', F: 'm', G: 'g', H: 'd', I: 'g', J: 'd', K: 'm', L: 'd', M: 'd', N: 'g', O: 'd', P: 'm', Q: 'm', R: 'd', S: 'g' };
  var horizontal = { 11: 'm', 12: 'm', 13: 'g', 14: 'm', 15: 'd', 16: 'm', 17: 'd', 18: 'd', 19: 'm', 20: 'd', 21: 'd', 22: 'm', 23: 'm', 24: 'd', 25: 'd', 26: 'd', 27: 'd', 28: 'm', 29: 'm', 30: 'm' };
  var headers = ['Pay Period Ending', 'Regular Hours Worked', 'Regular Pay Rate', 'Regular Wages', 'Overtime Hours Worked', 'Overtime Pay Rate', 'Overtime Wages', 'Gross Pay', 'Federal Withholding Tax', 'State Withholding Tax', 'Social Security Tax', 'Medicare Tax', 'Retirement Contribution', 'Life Insurance', 'Charitable Contribution', 'Additional Withholding', 'Check Number', 'Net Pay'];
  var labels = { 14: 'Q1', 15: 'Q2', 16: 'Q3', 18: 'Oct', 19: 'Nov', 21: 'Placeholder', 22: 'Placeholder', 23: 'Placeholder', 24: 'Placeholder', 26: 'Dec', 27: 'Q4', 30: 'YTD' };
  var texts = {
    B2: 'Employee Earnings Record', B4: 'Name', B6: 'Address', B10: 'SS#',
    D4: 'HUNTER CRANSTON', D6: '85 SOUTH', D8: 'HERNDON', D10: '111-11-11',
    J4: 'Marital Status', N4: 'MARRIED', N6: '2', N9: '2',
    J9: 'State Withholding Allow.', C12: 'Earnings', J12: 'Deductions'
  };
  var moneyRows = [26, 27, 30];
  var moneyCols = 'EHIJKLMNOPQ';
  var underlined = { 4: 'd', 6: 'g', 8: 'm', 10: 'd' };
  var underlinedRight = { 4: 'd', 6: 'g', 9: 'm' };
  var closedRows = [12, 13, 17, 20, 25, 28, 29];

  function el(cls, text) {
    var d = document.createElement('div');
    d.className = cls;
    if (text !== undefined) d.textContent = text;
    return d;
  }

  sheet.appendChild(el('corner'));
  COLS.forEach(function (c) { sheet.appendChild(el(c === 'D' ? 'ch sel' : 'ch', c)); });

  for (var r = 1; r <= 35; r++) {
    var rowCls = 'rh' + (r === 13 ? ' tall' : '') + (r === 4 ? ' sel' : '');
    sheet.appendChild(el(rowCls, String(r)));

    COLS.forEach(function (c, i) {
      var cls = ['cell'];
      var inBlock = i <= 18;               // A..S
      var inBody = r >= 12 && r <= 30;
      if (inBlock && r <= 31) cls.push('bare');

      // vertical rules
      if (inBody && inBlock) {
        var keep;
        if (r === 12) keep = c === 'A' || c === 'B' || c === 'I' || c === 'Q' || c === 'S';
        else if (c === 'S') keep = closedRows.indexOf(r) >= 0;
        else keep = true;
        if (keep) cls.push('v-' + vertical[c]);
      }
      // horizontal rules
      if (r >= 11 && r <= 30 && i >= 1 && inBlock) cls.push('h-' + horizontal[r]);
      if (underlined[r] && i >= 3 && i <= 7) cls.push('h-' + underlined[r]);
      if (underlinedRight[r] && i >= 13 && i <= 17) cls.push('h-' + underlinedRight[r]);

      var cell = el(cls.join(' '));
      var key = c + r;
      if (r === 13 && i >= 1 && inBlock) {
        cell.classList.add('head');
        var s = document.createElement('span');
        s.textContent = headers[i - 1];
        cell.appendChild(s);
      } else if (texts[key]) {
        cell.textContent = texts[key];
        if (key === 'B2') { cell.textContent = ''; var ti = document.createElement('span'); ti.className = 'title'; ti.textContent = texts[key]; cell.appendChild(ti); }
        if (key === 'C12' || key === 'J12') cell.classList.add('em');
        if (key === 'N6' || key === 'N9') cell.classList.add('right');
        if (key === 'D4') cell.classList.add('sel-cell');
        if (key === 'J4') cell.classList.add('clip');
      } else if (key === 'J6') {
        var t2 = document.createElement('span');
        t2.className = 't2';
        t2.textContent = 'Fed. Withholding Allow.';
        cell.appendChild(t2);
      } else if (c === 'B' && labels[r]) {
        cell.textContent = labels[r];
        cell.classList.add('clip');
      } else if (labels[r] && c === 'S') {
        cell.textContent = '$';
        cell.classList.add('money-cell');
      } else if (labels[r] && c === 'T') {
        cell.textContent = '-';
        cell.classList.add('dash');
      } else if (moneyRows.indexOf(r) >= 0 && moneyCols.indexOf(c) >= 0) {
        cell.textContent = '$';
        cell.classList.add('money-cell');
      }
      sheet.appendChild(cell);
    });
  }
})();
```
